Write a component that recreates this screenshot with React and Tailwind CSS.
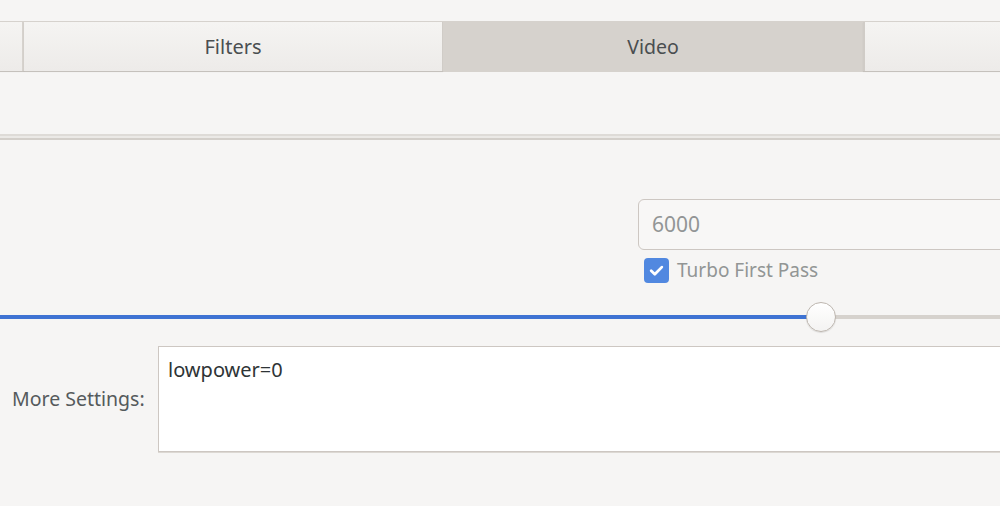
export default function App() {
  return (
    <div
      className="w-[1000px] h-[506px] overflow-hidden bg-[#f6f5f4] text-[#2e3436] flex flex-col"
      style={{ fontFamily: '"Noto Sans", "Open Sans", sans-serif' }}
    >
      <div className="h-[21px] shrink-0" />

      {/* Tab bar */}
      <div className="h-[51px] shrink-0 flex border-y border-[#d6d2cd] text-[#4a4e50]">
        <div className="w-[24px] shrink-0 bg-gradient-to-b from-[#f5f4f2] to-[#edebe9] border-r-2 border-[#d6d2cd] shadow-[0_1px_1px_rgba(0,0,0,0.08)]" />
        <div className="w-[419px] shrink-0 flex items-center justify-center pt-[1px] text-[20px] bg-gradient-to-b from-[#f5f4f2] to-[#edebe9] border-r border-[#d0ccc7] shadow-[0_1px_1px_rgba(0,0,0,0.08)]">
          Filters
        </div>
        <div className="w-[420px] shrink-0 flex items-center justify-center pt-[1px] text-[19.5px] bg-[#d6d2cd]">
          Video
        </div>
        <div className="flex-1 bg-gradient-to-b from-[#f5f4f2] to-[#edebe9] border-l-2 border-[#d0ccc7] shadow-[0_1px_1px_rgba(0,0,0,0.08)]" />
      </div>

      <div className="h-[62px] shrink-0" />

      {/* separator */}
      <div className="h-[6px] shrink-0 border-t-2 border-b-2 border-t-[#dedbd7] border-b-[#d3cfca] bg-[#ebe9e6]" />

      <div className="h-[59px] shrink-0" />

      {/* bitrate input */}
      <div className="flex shrink-0 pl-[638px]">
        <div className="w-[400px] shrink-0 h-[51px] rounded-[6px] border border-[#cdc7c2] bg-[#f8f7f6] flex items-center px-[13px] pt-[1px] text-[21px] text-[#929595]">
          6000
        </div>
      </div>

      {/* checkbox */}
      <div className="flex items-center shrink-0 pl-[644px] mt-[8px] h-[25px] gap-[8px]">
        <div className="w-[25px] h-[25px] rounded-[4px] bg-[#5188e0] flex items-center justify-center">
          <svg width="17" height="17" viewBox="0 0 16 16" fill="none">
            <path d="M3 8.3 L6.4 11.5 L13 4.8" stroke="white" strokeWidth="2.6" strokeLinecap="round" strokeLinejoin="round" />
          </svg>
        </div>
        <span className="text-[19px] text-[#929595]">Turbo First Pass</span>
      </div>

      {/* slider */}
      <div className="relative h-[30px] shrink-0 mt-[19px] flex items-center">
        <div className="h-[4px] w-[821px] bg-[#3f73d3] rounded-r-full" />
        <div className="h-[4px] flex-1 bg-[#d6d2cd]" />
        <div className="absolute left-[806px] top-0 w-[30px] h-[30px] rounded-full border border-[#bdb6af] bg-gradient-to-b from-[#ffffff] to-[#f4f3f2] shadow-[0_1px_1px_rgba(0,0,0,0.1)]" />
      </div>

      {/* more settings */}
      <div className="flex items-center shrink-0 mt-[14px]">
        <div className="w-[158px] shrink-0 pl-[12px] text-[19.5px] text-[#555a5c]">More Settings:</div>
        <div className="w-[900px] shrink-0 h-[106px] bg-white border border-[#cdc7c2] shadow-[0_1px_0_#dcd8d3] px-[9px] pt-[8px] text-[20px] text-[#2e3436]">
          lowpower=0
        </div>
      </div>
    </div>
  );
}
